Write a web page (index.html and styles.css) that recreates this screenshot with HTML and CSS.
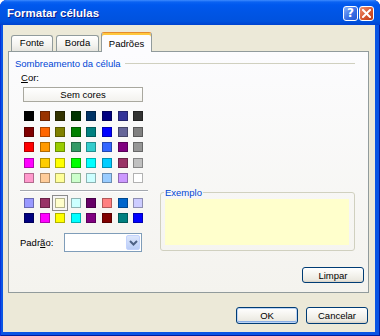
FILE: index.html
```html
<!DOCTYPE html>
<html lang="pt">
<head>
<meta charset="utf-8">
<title>Formatar células</title>
<link rel="stylesheet" href="styles.css">
</head>
<body>
<div class="window">
  <div class="titlebar">
    <span class="title">Formatar células</span>
    <div class="caption-btns">
      <span class="cbtn help">?</span>
      <span class="cbtn close"><svg width="9" height="9" viewBox="0 0 9 9"><path d="M1 1L8 8M8 1L1 8" stroke="#fff" stroke-width="2" stroke-linecap="square"/></svg></span>
    </div>
  </div>
  <div class="client">
    <div class="tabs">
      <div class="tab tab-fonte">Fonte</div>
      <div class="tab tab-borda">Borda</div>
      <div class="tab tab-active">Padrões</div>
    </div>
    <div class="panel">
      <div class="section-head"><span>Sombreamento da célula</span><span class="rule"></span></div>
      <div class="content">
        <div class="left">
          <div class="cor"><u>C</u>or:</div>
          <div class="nocolor">Sem cores</div>
          <div class="palette">
            <span class="sw" style="background:#000000"></span>
            <span class="sw" style="background:#993300"></span>
            <span class="sw" style="background:#333300"></span>
            <span class="sw" style="background:#003300"></span>
            <span class="sw" style="background:#003366"></span>
            <span class="sw" style="background:#000080"></span>
            <span class="sw" style="background:#333399"></span>
            <span class="sw" style="background:#333333"></span>
            <span class="sw" style="background:#800000"></span>
            <span class="sw" style="background:#FF6600"></span>
            <span class="sw" style="background:#808000"></span>
            <span class="sw" style="background:#008000"></span>
            <span class="sw" style="background:#008080"></span>
            <span class="sw" style="background:#0000FF"></span>
            <span class="sw" style="background:#666699"></span>
            <span class="sw" style="background:#808080"></span>
            <span class="sw" style="background:#FF0000"></span>
            <span class="sw" style="background:#FF9900"></span>
            <span class="sw" style="background:#99CC00"></span>
            <span class="sw" style="background:#339966"></span>
            <span class="sw" style="background:#33CCCC"></span>
            <span class="sw" style="background:#3366FF"></span>
            <span class="sw" style="background:#800080"></span>
            <span class="sw" style="background:#969696"></span>
            <span class="sw" style="background:#FF00FF"></span>
            <span class="sw" style="background:#FFCC00"></span>
            <span class="sw" style="background:#FFFF00"></span>
            <span class="sw" style="background:#00FF00"></span>
            <span class="sw" style="background:#00FFFF"></span>
            <span class="sw" style="background:#00CCFF"></span>
            <span class="sw" style="background:#993366"></span>
            <span class="sw" style="background:#C0C0C0"></span>
            <span class="sw" style="background:#FF99CC"></span>
            <span class="sw" style="background:#FFCC99"></span>
            <span class="sw" style="background:#FFFF99"></span>
            <span class="sw" style="background:#CCFFCC"></span>
            <span class="sw" style="background:#CCFFFF"></span>
            <span class="sw" style="background:#99CCFF"></span>
            <span class="sw" style="background:#CC99FF"></span>
            <span class="sw" style="background:#FFFFFF"></span>
          </div>
          <div class="sep"></div>
          <div class="palette palette-chart">
            <span class="sw" style="background:#9999FF"></span>
            <span class="sw" style="background:#993366"></span>
            <span class="sw sw-selected" style="background:#FFFFCC"></span>
            <span class="sw" style="background:#CCFFFF"></span>
            <span class="sw" style="background:#660066"></span>
            <span class="sw" style="background:#FF8080"></span>
            <span class="sw" style="background:#0066CC"></span>
            <span class="sw" style="background:#CCCCFF"></span>
            <span class="sw" style="background:#000080"></span>
            <span class="sw" style="background:#FF00FF"></span>
            <span class="sw" style="background:#FFFF00"></span>
            <span class="sw" style="background:#00FFFF"></span>
            <span class="sw" style="background:#800080"></span>
            <span class="sw" style="background:#800000"></span>
            <span class="sw" style="background:#008080"></span>
            <span class="sw" style="background:#0000FF"></span>
          </div>
          <div class="pattern">
            <span class="pattern-label">Padr<u>ã</u>o:</span>
            <div class="combo"><span class="drop"><svg width="9" height="6" viewBox="0 0 9 6"><path d="M1 1L4.5 4.5L8 1" fill="none" stroke="#4D6185" stroke-width="2"/></svg></span></div>
          </div>
        </div>
        <fieldset class="sample">
          <legend>Exemplo</legend>
          <div class="sample-fill"></div>
        </fieldset>
      </div>
      <div class="panel-foot"><button class="btn btn-limpar">Limpar</button></div>
    </div>
    <div class="footer">
      <button class="btn btn-default">OK</button>
      <button class="btn">Cancelar</button>
    </div>
  </div>
</div>
</body>
</html>
```

FILE: styles.css
```css
* { box-sizing: border-box; }
html, body { margin: 0; padding: 0; }
body {
  width: 380px;
  height: 336px;
  overflow: hidden;
  font: 9.5px/13px "Liberation Sans", Arial, sans-serif;
  color: #000;
  background: #fff;
}
.window {
  width: 380px;
  height: 336px;
  display: flex;
  flex-direction: column;
  background: #0A55E4;
  border-radius: 7px 7px 0 0;
  overflow: hidden;
  box-shadow: inset 1px 0 #0831D9, inset -1px 0 #001EA0, inset 0 -1px #001EA0;
}
.titlebar {
  height: 25px;
  flex: none;
  display: flex;
  align-items: center;
  padding: 2px 6px 0 7px;
  background: linear-gradient(#3D8BFF 0, #0A62F2 2px, #0058EE 5px, #0055E5 50%, #0052DE 85%, #0043CF 100%);
}
.title {
  flex: 1;
  color: #fff;
  font-weight: bold;
  font-size: 11.5px;
  text-shadow: 1px 1px 0 #0A1E8C;
}
.caption-btns { display: flex; gap: 1px; }
.cbtn {
  width: 15px;
  height: 15px;
  border: 1px solid #fff;
  border-radius: 3px;
  display: flex;
  align-items: center;
  justify-content: center;
}
.help {
  background: linear-gradient(135deg, #8AB2FA, #3A70E6 55%, #2456D0);
  color: #fff;
  font: bold 12px/13px "DejaVu Sans", sans-serif;
}
.close {
  background: linear-gradient(135deg, #F09273, #D6562F 55%, #BE3A14);
}
.client {
  flex: 1;
  margin: 0 5px 4px 3px;
  background: #ECE9D8;
  display: flex;
  flex-direction: column;
  padding: 0 6px 8px 5px;
}
.tabs {
  height: 26px;
  flex: none;
  display: flex;
  align-items: flex-end;
  padding-left: 3px;
}
.tab {
  height: 16px;
  border: 1px solid #919B9C;
  border-bottom: none;
  border-radius: 3px 3px 0 0;
  background: linear-gradient(#FFFFFF, #F4F3EF 60%, #E6E5DF);
  text-align: center;
  line-height: 14px;
}
.tab-fonte { width: 42px; margin-right: 3px; }
.tab-borda { width: 43px; margin-right: 2px; }
.tab-active {
  position: relative;
  z-index: 1;
  width: 51px;
  height: 20px;
  margin-bottom: -1px;
  border-top-color: #E68B2C;
  background: #FCFCFE;
  box-shadow: inset 0 2px #FFC73C;
  padding-top: 4px;
  line-height: 13px;
}
.panel {
  border: 1px solid #919B9C;
  background: linear-gradient(#FCFCFE, #F4F3EE);
  padding: 5px 4px 9px 0;
}
.section-head {
  display: flex;
  align-items: center;
  height: 13px;
  padding-left: 6px;
  margin-right: 9px;
  color: #0046D5;
}
.rule {
  flex: 1;
  height: 1px;
  margin-left: 4px;
  background: #D0D0BF;
}
.content {
  display: flex;
  align-items: flex-end;
  gap: 12px;
  padding-left: 11px;
}
.left { width: 128px; }
.cor { margin-top: 1px; padding-left: 1px; }
u { text-decoration-thickness: 1px; text-underline-offset: 1px; }
.nocolor {
  margin: 3px 0 0 3px;
  width: 120px;
  height: 15px;
  border: 1px solid #A9A89F;
  background: linear-gradient(#FFFFFF, #F3F2EE);
  text-align: center;
  line-height: 13px;
}
.palette {
  display: grid;
  grid-template-columns: repeat(8, 10px);
  column-gap: 5.6px;
  row-gap: 5.5px;
  margin: 9px 0 0 4px;
}
.palette-chart { margin-top: 6px; row-gap: 5px; }
.sw {
  display: block;
  width: 10px;
  height: 10px;
  border: 1px solid rgba(0, 0, 0, 0.3);
}
.sw-selected {
  outline: 1px solid #8C8C8C;
  outline-offset: 2px;
}
.sep {
  margin-top: 7px;
  height: 2px;
  border-top: 1px solid #A3A7AE;
  border-bottom: 1px solid #FFFFFF;
}
.pattern {
  display: flex;
  align-items: center;
  margin-top: 10px;
}
.pattern-label { width: 44px; }
.combo {
  width: 78px;
  height: 19px;
  border: 1px solid #7F9DB9;
  background: #fff;
  display: flex;
  justify-content: flex-end;
  padding: 1px;
}
.drop {
  width: 14px;
  height: 15px;
  border-radius: 2px;
  background: linear-gradient(#DDE7FC, #BACDF7);
  border: 1px solid #C3D3FD;
  display: flex;
  align-items: center;
  justify-content: center;
}
.sample {
  width: 195px;
  margin: 0 0 1px 0;
  padding: 0 5px 5px 4px;
  border: 1px solid #D0D0BF;
  border-radius: 3px;
  min-width: 0;
}
.sample legend {
  color: #0046D5;
  padding: 0 1px;
  margin-left: -1px;
  line-height: 13px;
}
.sample-fill {
  height: 46px;
  background: #FFFFCC;
}
.panel-foot {
  display: flex;
  justify-content: flex-end;
  margin-top: 15px;
}
.btn {
  font: 9.5px/13px "Liberation Sans", Arial, sans-serif;
  color: #000;
  width: 62px;
  height: 17px;
  padding: 0;
  border: 1px solid #003C74;
  border-radius: 3px;
  background: linear-gradient(#FFFFFF 0%, #F5F4EF 45%, #EBE9E1 85%, #D6D0C5 100%);
}
.btn-limpar { height: 16px; }
.btn-default {
  box-shadow: inset 0 0 0 1px #BCD4F6, inset 0 -1px 0 1px #89ADE4;
}
.footer {
  display: flex;
  justify-content: flex-end;
  gap: 8px;
  margin-top: 14px;
  padding-right: 1px;
}
```
